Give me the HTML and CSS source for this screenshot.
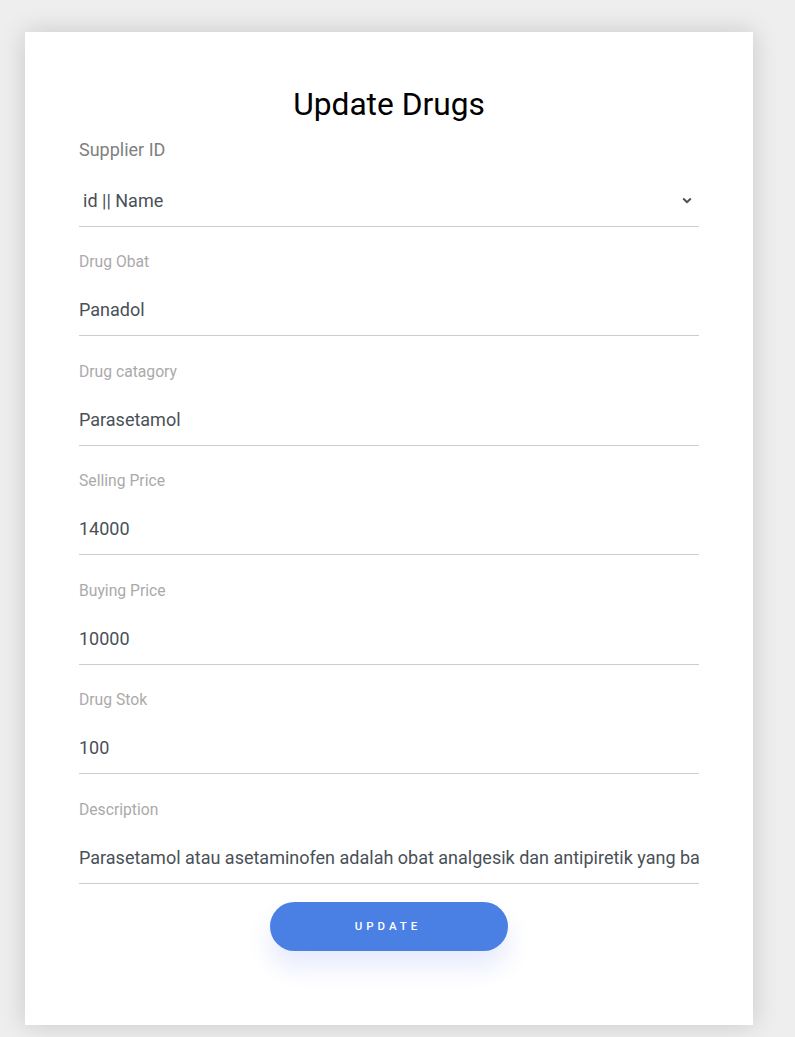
FILE: index.html
```html
<!DOCTYPE html>
<html lang="en">
<head>
<meta charset="utf-8">
<title>Update Drugs</title>
<link rel="stylesheet" href="styles.css">
</head>
<body>
<div class="card">
  <h1 class="title">Update Drugs</h1>
  <form class="form">
    <div class="group first">
      <label class="label label-strong">Supplier ID</label>
      <div class="select">
        <span class="select-text">id || Name</span>
        <svg class="chevron" width="10" height="7" viewBox="0 0 10 7"><path d="M1.2 1.5 L5 5.2 L8.8 1.5" fill="none" stroke="#495057" stroke-width="2"/></svg>
      </div>
    </div>
    <div class="group">
      <label class="label">Drug Obat</label>
      <input class="input" type="text" value="Panadol">
    </div>
    <div class="group">
      <label class="label">Drug catagory</label>
      <input class="input" type="text" value="Parasetamol">
    </div>
    <div class="group">
      <label class="label">Selling Price</label>
      <input class="input" type="text" value="14000">
    </div>
    <div class="group">
      <label class="label">Buying Price</label>
      <input class="input" type="text" value="10000">
    </div>
    <div class="group">
      <label class="label">Drug Stok</label>
      <input class="input" type="text" value="100">
    </div>
    <div class="group">
      <label class="label">Description</label>
      <input class="input" type="text" value="Parasetamol atau asetaminofen adalah obat analgesik dan antipiretik yang banyak digunakan untuk meredakan sakit kepala">
    </div>
    <div class="actions">
      <button type="button" class="btn">UPDATE</button>
    </div>
  </form>
</div>
</body>
</html>
```

FILE: styles.css
```css
* { box-sizing: border-box; }
html, body { margin: 0; padding: 0; }
body {
  background: #eeeeee;
  font-family: Roboto, "Noto Sans", Arial, sans-serif;
  height: 1037px;
  overflow: hidden;
}
.card {
  width: 728px;
  margin: 32px 0 0 25px;
  background: #ffffff;
  padding: 54px 54px 74px;
  box-shadow: 0 0 24px rgba(0, 0, 0, 0.16);
}
.title {
  margin: 0;
  font-size: 31.7px;
  line-height: 38px;
  font-weight: 400;
  color: #000;
  text-align: center;
}
.form { display: flex; flex-direction: column; }
.group { display: flex; flex-direction: column; margin-top: 25.45px; }
.group.first { margin-top: 16px; }
.label {
  display: block;
  font-size: 15.7px;
  line-height: 20px;
  color: #aaaaaa;
}
.label-strong {
  font-size: 18px;
  color: #808080;
}
.select {
  margin-top: 14px;
  height: 53px;
  border-bottom: 1px solid #cccccc;
  display: flex;
  align-items: center;
  justify-content: space-between;
  padding: 0 7px 0 4px;
}
.select-text {
  font-size: 18px;
  color: #495057;
}
.input {
  margin-top: 12px;
  height: 52px;
  border: none;
  border-bottom: 1px solid #cccccc;
  padding: 0;
  font-family: Roboto, "Noto Sans", Arial, sans-serif;
  font-size: 18px;
  color: #495057;
  background: transparent;
  outline: none;
  width: 100%;
}
.actions {
  display: flex;
  justify-content: center;
  margin-top: 18px;
}
.btn {
  width: 238px;
  height: 49px;
  border: none;
  border-radius: 25px;
  background: #4a80e4;
  color: #fff;
  font-family: Roboto, "Noto Sans", Arial, sans-serif;
  font-size: 11.5px;
  font-weight: 500;
  letter-spacing: 4px;
  padding-left: 4px;
  box-shadow: 0 15px 25px rgba(70, 100, 235, 0.14);
}
```
